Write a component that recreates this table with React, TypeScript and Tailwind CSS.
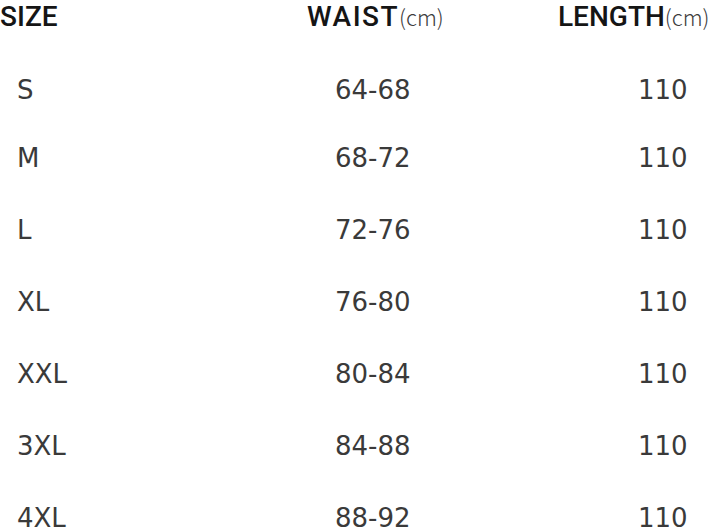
const rows = [
  { size: "S", waist: "64-68", length: "110" },
  { size: "M", waist: "68-72", length: "110" },
  { size: "L", waist: "72-76", length: "110" },
  { size: "XL", waist: "76-80", length: "110" },
  { size: "XXL", waist: "80-84", length: "110" },
  { size: "3XL", waist: "84-88", length: "110" },
  { size: "4XL", waist: "88-92", length: "110" },
];

function Head({
  label,
  unit,
  wide,
}: {
  label: string;
  unit?: string;
  wide?: boolean;
}) {
  return (
    <div className="flex items-baseline text-[28px] leading-[33px] font-medium text-[#151515] [font-family:Roboto,'Noto_Sans',sans-serif]">
      <span className={wide ? "tracking-[1.5px]" : ""}>{label}</span>
      {unit && (
        <span className="text-[22px] font-light text-[#3c3c3c] [font-family:'Noto_Sans_CJK_JP',sans-serif]">
          {unit}
        </span>
      )}
    </div>
  );
}

export default function App() {
  return (
    <div className="w-[726px] h-[530px] overflow-hidden bg-white">
      <div className="grid grid-cols-[307px_251px_1fr] h-[54px] items-start">
        <Head label="SIZE" />
        <Head label="WAIST" unit="(cm)" wide />
        <Head label="LENGTH" unit="(cm)" />
      </div>
      {rows.map((r, i) => (
        <div
          key={r.size}
          className={`grid grid-cols-[307px_251px_1fr] leading-[72px] text-[26px] text-[#3a3a3a] [font-family:'DejaVu_Sans',sans-serif] ${
            i === 0 ? "h-[68px]" : "h-[72px]"
          }`}
        >
          <div className="pl-[17px]">{r.size}</div>
          <div className="pl-[28px]">{r.waist}</div>
          <div className="pl-[80px]">{r.length}</div>
        </div>
      ))}
    </div>
  );
}
